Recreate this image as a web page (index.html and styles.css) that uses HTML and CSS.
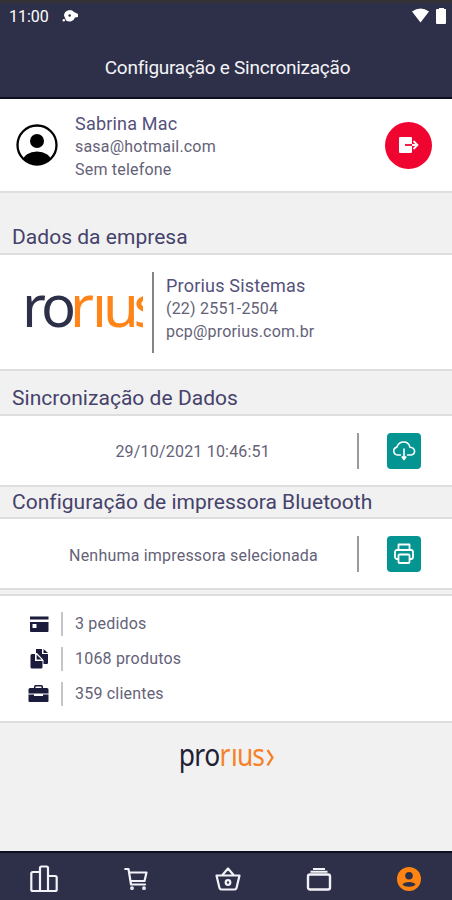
FILE: index.html
```html
<!DOCTYPE html>
<html lang="pt-BR">
<head>
  <meta charset="UTF-8">
  <meta name="viewport" content="width=device-width, initial-scale=1.0">
  <title>Configuração e Sincronização</title>
  <link rel="stylesheet" href="styles.css">
</head>
<body>

  <header class="header">
    <div class="status-bar">
      <span class="clock">11:00</span>
      <svg class="status-app" width="17" height="14" viewBox="0 0 17 14">
        <path d="M2 6.500A5.800 5.800 0 0 1 12 3l4 2v3l-3 .5a6 6 0 0 1-9 3z" fill="#fff"/>
        <circle cx="1.800" cy="11.300" r="1.200" fill="#fff"/>
        <circle cx="7.700" cy="6.500" r="1.300" fill="#2e3049"/>
      </svg>
      <svg class="status-signal" width="36" height="18" viewBox="0 0 36 18">
        <path d="M1 4.500Q9.500-1.500 18 4.500L9.500 15.500z" fill="#fff"/>
        <path d="M26 2h2V1h5v1h2v14a1 1 0 0 1-1 1h-8a1 1 0 0 1-1-1V3a1 1 0 0 1 1-1z" fill="#fff"/>
      </svg>
    </div>
    <h1 class="title">Configuração e Sincronização</h1>
  </header>

  <main>
    <section class="card user">
      <svg class="avatar" width="42" height="42" viewBox="0 0 42 42">
        <clipPath id="face"><circle cx="21" cy="21" r="19"/></clipPath>
        <circle cx="21" cy="21" r="19.500" fill="#fff" stroke="#000" stroke-width="2.300"/>
        <g clip-path="url(#face)">
          <circle cx="21" cy="17" r="7"/>
          <ellipse cx="21" cy="37" rx="14" ry="9.500"/>
        </g>
      </svg>
      <div class="info">
        <p class="name user-name">Sabrina Mac</p>
        <p class="email">sasa@hotmail.com</p>
        <p class="phone">Sem telefone</p>
      </div>
      <button class="logout">
        <svg width="20" height="16" viewBox="0 0 20 16">
          <rect x="0" y="0" width="13" height="16" rx="1" fill="#fff"/>
          <path d="M6 8h7" stroke="#ef0530" stroke-width="1.800"/>
          <path d="M13 8h5M14.500 4l4 4-4 4" fill="none" stroke="#fff" stroke-width="1.800"/>
        </svg>
      </button>
    </section>

    <h2 class="heading heading-company">Dados da empresa</h2>
    <section class="card company">
      <svg class="company-logo" width="117" height="60" viewBox="0 0 117 60">
        <text class="logo-text" y="45" x="-4 15" fill="#2e3049">ro</text>
        <text class="logo-text" y="45" x="44 66 77 107.500" fill="#ff8419">rıus</text>
      </svg>
      <div class="bar bar-company"></div>
      <div class="info">
        <p class="name company-name">Prorius Sistemas</p>
        <p class="company-phone">(22) 2551-2504</p>
        <p class="company-email">pcp@prorius.com.br</p>
      </div>
    </section>

    <h2 class="heading heading-sync">Sincronização de Dados</h2>
    <section class="card action sync">
      <p class="sync-date">29/10/2021 10:46:51</p>
      <div class="bar"></div>
      <button class="square">
        <svg width="24" height="22" viewBox="0 0 24 22" fill="none" stroke="#fff" stroke-width="1.600" stroke-linecap="round" stroke-linejoin="round">
          <path d="M8.500 15H5.500a4 4 0 0 1-.6-7.900C6 3.500 8.600 2 11.600 2c3.400 0 5.700 2.200 6.300 5.200 6.200.5 6.200 7.800.4 7.800H15.500M12 9v9"/>
          <path d="M10.200 17h3.600L12 19.500z" fill="#fff"/>
        </svg>
      </button>
    </section>

    <h2 class="heading heading-printer">Configuração de impressora Bluetooth</h2>
    <section class="card action printer">
      <p class="printer-name">Nenhuma impressora selecionada</p>
      <div class="bar"></div>
      <button class="square">
        <svg width="20" height="22" viewBox="0 0 20 22" fill="none" stroke="#fff" stroke-width="1.800" stroke-linejoin="round">
          <path d="M4.500 7V1.500h11V7M4.500 16H3a2 2 0 0 1-2-2V9a2 2 0 0 1 2-2h14a2 2 0 0 1 2 2v5a2 2 0 0 1-2 2h-1.500"/>
          <rect x="4.500" y="11.500" width="11" height="8.500" rx="1"/>
        </svg>
      </button>
    </section>

    <section class="card totals">
      <div class="total">
        <svg width="21" height="20" viewBox="0 0 21 20" fill="#1b1b3c">
          <path d="M2 2.500h18.500v3H2zM2 8h18.500v9a1 1 0 0 1-1 1H3a1 1 0 0 1-1-1z"/>
          <path d="M4.500 10h4v4h-4z" fill="#fff"/>
        </svg>
        <div class="total-bar"></div>
        <p class="orders">3 pedidos</p>
      </div>
      <div class="total">
        <svg width="21" height="20" viewBox="0 0 21 20" fill="#1b1b3c">
          <path d="M8 0h6v5h6v9a1 1 0 0 1-1 1h-3.500v-4L9 4H8z"/>
          <path d="M15.500 0L20 4h-4.500z"/>
          <path d="M4 5h3v7h7.500v6a1.500 1.500 0 0 1-1.500 1.500H4A1.500 1.500 0 0 1 2.500 18V6.500A1.500 1.500 0 0 1 4 5z"/>
          <path d="M8.500 5.500l5 5h-5z"/>
          <path d="M7.800 5v5.500a1 1 0 0 0 1 1h5.500" fill="none" stroke="#fff" stroke-width=".8"/>
        </svg>
        <div class="total-bar"></div>
        <p class="products">1068 produtos</p>
      </div>
      <div class="total">
        <svg width="21" height="20" viewBox="0 0 21 20" fill="#1b1b3c">
          <path d="M6 4V2.500A1.500 1.500 0 0 1 7.500 1h6A1.500 1.500 0 0 1 15 2.500V4h4a1.500 1.500 0 0 1 1.500 1.500V9.500H.5v-4A1.500 1.500 0 0 1 2 4zM7.500 4h6V2.500h-6z" fill-rule="evenodd"/>
          <path d="M.5 10.500H6V12h9v-1.500h5.500V17a1 1 0 0 1-1 1h-18a1 1 0 0 1-1-1z"/>
        </svg>
        <div class="total-bar"></div>
        <p class="clients">359 clientes</p>
      </div>
    </section>

    <footer class="brand">
      <svg class="brand-logo" width="96" height="34" viewBox="0 0 96 34">
        <g transform="scale(.88 1)">
          <text class="brand-text" y="23" x="-1.500 16.100 27.700" fill="#1f2134">pro</text>
          <text class="brand-text" y="23" x="45 58 64.800 82" fill="#f5822a">rıus</text>
        </g>
        <path d="M87.500 7l5 7.500-5 8" fill="none" stroke="#f5822a" stroke-width="2.300"/>
      </svg>
    </footer>
  </main>

  <nav class="tabs">
    <a class="tab">
      <svg width="28" height="28" viewBox="0 0 28 28" fill="none" stroke="#f2f2f8" stroke-width="2.200" stroke-linejoin="round">
        <path d="M10 26V3a1.500 1.500 0 0 1 1.500-1.500h5A1.500 1.500 0 0 1 18 3v23zM10 26H2.800a1.500 1.500 0 0 1-1.500-1.500V8.500A1.500 1.500 0 0 1 2.800 7H10M18 11h7.200a1.500 1.500 0 0 1 1.500 1.500v12a1.500 1.500 0 0 1-1.500 1.500H18"/>
      </svg>
    </a>
    <a class="tab">
      <svg width="24" height="24" viewBox="0 0 24 24" fill="none" stroke="#f2f2f8" stroke-width="2.200" stroke-linejoin="round" stroke-linecap="round">
        <path d="M1.200 2h3.300L7 17.500h14M5 5.500h17.500l-2 8.500H6.500"/>
        <circle cx="8" cy="21.200" r=".8"/>
        <circle cx="20" cy="21.200" r=".8"/>
      </svg>
    </a>
    <a class="tab">
      <svg width="26" height="26" viewBox="0 0 26 26" fill="none" stroke="#f2f2f8" stroke-width="2.200" stroke-linejoin="round">
        <path d="M1.500 9.500h23L21.500 22a2 2 0 0 1-2 1.500h-13a2 2 0 0 1-2-1.500zM7 9.500l6-7 6 7"/>
        <circle cx="13" cy="16.500" r="2.300"/>
      </svg>
    </a>
    <a class="tab">
      <svg width="26" height="26" viewBox="0 0 26 26" fill="none" stroke="#f2f2f8" stroke-width="2.400" stroke-linejoin="round">
        <rect x="2" y="8.500" width="22" height="15" rx="2"/>
        <path d="M4.500 5.700h17M7 3h12" stroke-width="2"/>
      </svg>
    </a>
    <a class="tab">
      <svg width="24" height="24" viewBox="0 0 24 24">
        <circle cx="12" cy="12" r="12" fill="#ff8412"/>
        <circle cx="12" cy="8.800" r="3.800" fill="#2e3049"/>
        <path d="M5.500 17.500c1-3.500 12-3.500 13 0-2 3-11 3-13 0z" fill="#2e3049"/>
      </svg>
    </a>
  </nav>

</body>
</html>
```

FILE: styles.css
```css
* {
  box-sizing: border-box;
}

body {
  margin: 0;
  height: 900px;
  display: flex;
  flex-direction: column;
  font-family: Roboto, sans-serif;
  font-size: 16px;
  letter-spacing: .2px;
  color: #646278;
  background-color: #f1f1f1;
}

p,
h1,
h2 {
  margin: 0;
  font-weight: 400;
  white-space: nowrap;
}

button {
  border: none;
  padding: 0;
  display: flex;
  align-items: center;
  justify-content: center;
}

svg {
  display: block;
}

.header {
  height: 99px;
  border-top: 3px solid #343236;
  border-bottom: 2px solid #0d0e20;
  background-color: #2e3049;
}

.status-bar {
  height: 26px;
  padding: 0 5px 0 9px;
  display: flex;
  align-items: center;
  color: #fff;
}

.clock {
  font-size: 16px;
  letter-spacing: 0;
  width: 41px;
}

.status-app {
  margin-left: 12px;
}

.status-signal {
  margin-left: auto;
}

.title {
  margin-top: 26px;
  padding-left: 3px;
  text-align: center;
  font-size: 19px;
  line-height: 26px;
  letter-spacing: -.25px;
  color: #f4f4f8;
}

.card {
  display: flex;
  align-items: center;
  background-color: #fff;
  border-bottom: 2px solid #dedede;
}

.user {
  height: 94px;
  padding: 0 20px 0 16px;
}

.info {
  line-height: 23px;
}

.user .info {
  margin-left: 17px;
  padding-top: 3px;
}

.name {
  font-size: 18px;
  color: #54517a;
}

.logout {
  width: 47px;
  height: 47px;
  margin-left: auto;
  border-radius: 50%;
  background-color: #ef0530;
}

.heading {
  padding-left: 12px;
  font-size: 21px;
  letter-spacing: .03px;
  color: #45426b;
  border-bottom: 2px solid #dedede;
}

.heading-company {
  height: 62px;
  line-height: 88px;
}

.company {
  height: 116px;
  padding-left: 26px;
}

.company-logo {
  overflow: hidden;
}

.logo-text {
  font-family: "Noto Sans", sans-serif;
  font-size: 58px;
  letter-spacing: 0;
}

.bar {
  width: 2px;
  height: 36px;
  background-color: #9a9a9e;
}

.bar-company {
  height: 81px;
  margin: 0 12px 0 9px;
  background-color: #858588;
}

.company .info {
  padding-bottom: 7px;
}

.heading-sync {
  height: 45px;
  line-height: 54px;
}

.action {
  padding-right: 31px;
}

.action p {
  margin-left: auto;
  padding-top: 2px;
}

.action .bar {
  margin-right: 28px;
}

.sync {
  height: 71px;
}

.action .sync-date {
  padding-right: 87px;
}

.square {
  width: 34px;
  height: 36px;
  border-radius: 4px;
  background-color: #049492;
}

.heading-printer {
  height: 32px;
  line-height: 30px;
}

.printer {
  height: 71px;
}

.action .printer-name {
  padding-top: 3px;
  padding-right: 39px;
}

.totals {
  height: 129px;
  margin-top: 4px;
  padding: 10px 0 10px 28px;
  border-top: 2px solid #dedede;
  flex-direction: column;
  align-items: flex-start;
}

.total {
  height: 35px;
  flex-shrink: 0;
  display: flex;
  align-items: center;
}

.total-bar {
  width: 2px;
  height: 24px;
  margin: 0 12px 0 12px;
  background-color: #c5c5c8;
}

.brand {
  padding: 20px 0 0 180px;
}

.brand-logo {
  overflow: visible;
}

.brand-text {
  font-family: "Noto Sans", sans-serif;
  font-size: 30px;
  letter-spacing: 0;
}

.tabs {
  height: 49px;
  margin-top: auto;
  padding-top: 5px;
  display: grid;
  grid-template-columns: 88px 96px 87px 95px 86px;
  border-top: 2px solid #0d0e20;
  background-color: #2e3049;
}

.tab {
  display: flex;
  align-items: center;
  justify-content: center;
}
```
